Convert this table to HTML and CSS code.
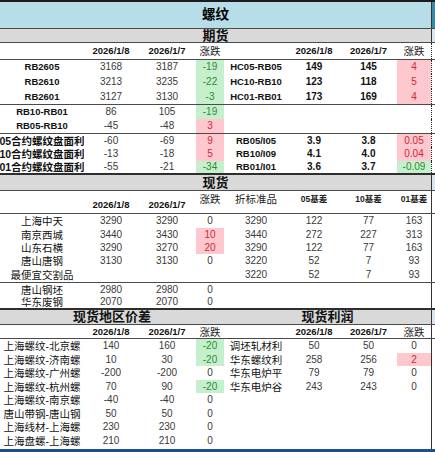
FILE: index.html
```html
<!DOCTYPE html>
<html lang="zh-CN">
<head>
<meta charset="utf-8">
<title>螺纹</title>
<link rel="stylesheet" href="styles.css">
</head>
<body>
<div class="sheet">
  <div class="row title-row">
    <div class="span8 title">螺纹</div><div class="edge edge-title"></div>
  </div>
  <div class="row band h14">
    <div class="span8 band-text">期货</div><div class="edge edge-band"></div>
  </div>
  <div class="row h17 bb">
    <div></div><div class="hd">2026/1/8</div><div class="hd">2026/1/7</div><div class="zd">涨跌</div>
    <div></div><div class="hd">2026/1/8</div><div class="hd">2026/1/7</div><div class="zd">涨跌</div><div class="edge dot"></div>
  </div>

  <div class="row h14">
    <div class="lb">RB2605</div><div>3168</div><div>3187</div><div class="g">-19</div>
    <div class="lb">HC05-RB05</div><div class="bn">149</div><div class="bn">145</div><div class="p">4</div><div class="edge dot"></div>
  </div>
  <div class="row h15">
    <div class="lb">RB2610</div><div>3213</div><div>3235</div><div class="g">-22</div>
    <div class="lb">HC10-RB10</div><div class="bn">123</div><div class="bn">118</div><div class="p">5</div><div class="edge dot"></div>
  </div>
  <div class="row h16 bb">
    <div class="lb">RB2601</div><div>3127</div><div>3130</div><div class="g">-3</div>
    <div class="lb">HC01-RB01</div><div class="bn">173</div><div class="bn">169</div><div class="p">4</div><div class="edge dot"></div>
  </div>

  <div class="row h14">
    <div class="lb">RB10-RB01</div><div>86</div><div>105</div><div class="g">-19</div>
    <div></div><div></div><div></div><div></div><div class="edge dot"></div>
  </div>
  <div class="row h15 bb">
    <div class="lb">RB05-RB10</div><div>-45</div><div>-48</div><div class="p">3</div>
    <div></div><div></div><div></div><div></div><div class="edge dot"></div>
  </div>

  <div class="row h13">
    <div class="lb cjk">05合约螺纹盘面利</div><div>-60</div><div>-69</div><div class="p">9</div>
    <div class="lb">RB05/I05</div><div class="bn">3.9</div><div class="bn">3.8</div><div class="p">0.05</div><div class="edge dot"></div>
  </div>
  <div class="row h14">
    <div class="lb cjk">10合约螺纹盘面利</div><div>-13</div><div>-18</div><div class="p">5</div>
    <div class="lb">RB10/I09</div><div class="bn">4.1</div><div class="bn">4.0</div><div class="p">0.04</div><div class="edge dot"></div>
  </div>
  <div class="row h14 bb2">
    <div class="lb cjk">01合约螺纹盘面利</div><div>-55</div><div>-21</div><div class="g">-34</div>
    <div class="lb">RB01/I01</div><div class="bn">3.6</div><div class="bn">3.7</div><div class="g">-0.09</div><div class="edge dot"></div>
  </div>

  <div class="row band h16">
    <div class="span8 band-text">现货</div><div class="edge edge-band"></div>
  </div>
  <div class="row h23 bb">
    <div></div><div class="hd low">2026/1/8</div><div class="hd low">2026/1/7</div><div class="zd high">涨跌</div>
    <div class="zd high">折标准品</div><div class="sm high">05基差</div><div class="sm high">10基差</div><div class="sm high">01基差</div><div class="edge solid"></div>
  </div>

  <div class="row h14">
    <div class="cj">上海中天</div><div>3290</div><div>3290</div><div>0</div>
    <div>3290</div><div>122</div><div>77</div><div>163</div><div class="edge solid"></div>
  </div>
  <div class="row h13">
    <div class="cj">南京西城</div><div>3440</div><div>3430</div><div class="p">10</div>
    <div>3440</div><div>272</div><div>227</div><div>313</div><div class="edge solid"></div>
  </div>
  <div class="row h13">
    <div class="cj">山东石横</div><div>3290</div><div>3270</div><div class="p">20</div>
    <div>3290</div><div>122</div><div>77</div><div>163</div><div class="edge solid"></div>
  </div>
  <div class="row h13">
    <div class="cj">唐山唐钢</div><div>3130</div><div>3130</div><div>0</div>
    <div>3220</div><div>52</div><div>7</div><div>93</div><div class="edge solid"></div>
  </div>
  <div class="row h16 bb">
    <div class="cj">最便宜交割品</div><div></div><div></div><div></div>
    <div>3220</div><div>52</div><div>7</div><div>93</div><div class="edge solid"></div>
  </div>
  <div class="row h13">
    <div class="cj">唐山钢坯</div><div>2980</div><div>2980</div><div>0</div>
    <div></div><div></div><div></div><div></div><div class="edge solid"></div>
  </div>
  <div class="row h14 bb2">
    <div class="cj">华东废钢</div><div>2070</div><div>2070</div><div>0</div>
    <div></div><div></div><div></div><div></div><div class="edge solid"></div>
  </div>

  <div class="row band h15">
    <div class="span4 band-text">现货地区价差</div><div class="span4 band-text">现货利润</div><div class="edge edge-band"></div>
  </div>
  <div class="row h14 bb">
    <div></div><div class="hd">2026/1/8</div><div class="hd">2026/1/7</div><div class="zd">涨跌</div>
    <div></div><div class="hd">2026/1/8</div><div class="hd">2026/1/7</div><div class="zd">涨跌</div><div class="edge solid"></div>
  </div>

  <div class="row h14">
    <div class="cj">上海螺纹-北京螺</div><div>140</div><div>160</div><div class="g">-20</div>
    <div class="cj">调坯轧材利</div><div>50</div><div>50</div><div>0</div><div class="edge solid"></div>
  </div>
  <div class="row h13">
    <div class="cj">上海螺纹-济南螺</div><div>10</div><div>30</div><div class="g">-20</div>
    <div class="cj">华东螺纹利</div><div>258</div><div>256</div><div class="p">2</div><div class="edge solid"></div>
  </div>
  <div class="row h14">
    <div class="cj">上海螺纹-广州螺</div><div>-200</div><div>-200</div><div>0</div>
    <div class="cj">华东电炉平</div><div>79</div><div>79</div><div>0</div><div class="edge solid"></div>
  </div>
  <div class="row h13">
    <div class="cj">上海螺纹-杭州螺</div><div>70</div><div>90</div><div class="g">-20</div>
    <div class="cj">华东电炉谷</div><div>243</div><div>243</div><div>0</div><div class="edge solid"></div>
  </div>
  <div class="row h14">
    <div class="cj">上海螺纹-南京螺</div><div>-40</div><div>-40</div><div>0</div>
    <div></div><div></div><div></div><div></div><div class="edge solid"></div>
  </div>
  <div class="row h13">
    <div class="cj">唐山带钢-唐山钢</div><div>50</div><div>50</div><div>0</div>
    <div></div><div></div><div></div><div></div><div class="edge solid"></div>
  </div>
  <div class="row h14">
    <div class="cj">上海线材-上海螺</div><div>230</div><div>230</div><div>0</div>
    <div></div><div></div><div></div><div></div><div class="edge solid"></div>
  </div>
  <div class="row h13">
    <div class="cj">上海盘螺-上海螺</div><div>210</div><div>210</div><div>0</div>
    <div></div><div></div><div></div><div></div><div class="edge solid"></div>
  </div>
  <div class="row h2">
    <div></div><div></div><div></div><div></div><div></div><div></div><div></div><div></div><div class="edge solid"></div>
  </div>
  <div class="status"></div>
</div>
</body>
</html>
```

FILE: styles.css
```css
html, body {
  margin: 0;
  padding: 0;
  background: #ffffff;
}

body {
  width: 435px;
  height: 452px;
  overflow: hidden;
  font-family: "Liberation Sans", "Noto Sans CJK SC", sans-serif;
  font-size: 10px;
  color: #3a3a3a;
}

.sheet {
  width: 435px;
  border-top: 2px solid #1c1c1c;
}

.row {
  display: grid;
  grid-template-columns: 84px 54px 58px 28px 64px 52px 57px 34px 4px;
  box-sizing: border-box;
}

.row > div {
  display: flex;
  align-items: center;
  justify-content: center;
  white-space: nowrap;
  overflow: hidden;
  line-height: 12px;
}

.h2 { height: 2px; }
.h13 { height: 13px; }
.h14 { height: 14px; }
.h15 { height: 15px; }
.h16 { height: 16px; }
.h17 { height: 17px; }
.h23 { height: 23px; }

.bb { border-bottom: 1px solid #4a4a4a; }
.bb2 { border-bottom: 2px solid #2e2e2e; }

.title-row {
  height: 27px;
  background: #b7dee8;
  border-bottom: 1px solid #4a4a4a;
}

.span8 { grid-column: span 8; }
.span4 { grid-column: span 4; }

.title {
  font-size: 13.5px;
  font-weight: bold;
  color: #000;
}

.band {
  background: #d9d9d9;
  border-bottom: 1px solid #4a4a4a;
}

.band-text {
  font-size: 13px;
  font-weight: bold;
  color: #111;
}

.edge {
  box-sizing: border-box;
  border-left: 1px solid #333;
}

.edge-title { background: #3a8aa6; }
.edge-band { background: #dce6f2; }
.dot { border-left: 1px dotted #222; }
.solid { border-left: 1px solid #333; }

.hd {
  font-size: 9.5px;
  font-weight: bold;
  color: #111;
}

.zd {
  font-size: 10.5px;
  color: #222;
}

.sm {
  font-size: 8.5px;
  font-weight: bold;
  color: #222;
}

.row > .high {
  align-items: flex-start;
  padding-top: 2px;
}

.row > .low {
  align-items: flex-end;
  padding-bottom: 2px;
}

.lb {
  font-weight: bold;
  color: #111;
  font-size: 9.5px;
}

.cjk {
  font-size: 10.5px;
}

.cj {
  font-size: 10.5px;
  color: #111;
}

.bn {
  font-weight: bold;
  color: #111;
}

.g {
  background: #c6efce;
  color: #2f8a2f;
}

.p {
  background: #ffc7ce;
  color: #cc2a36;
}

.status {
  height: 4px;
  background: #1f4f8f;
}
```
